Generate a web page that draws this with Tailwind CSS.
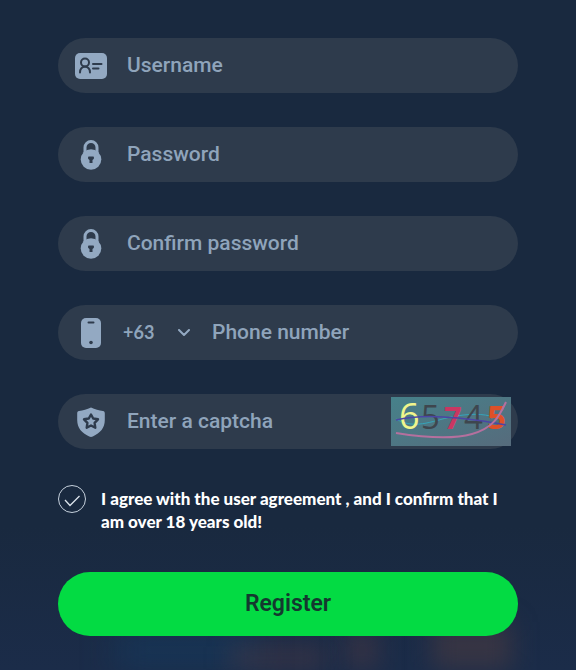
<!DOCTYPE html>
<html lang="en">
<head>
  <meta charset="UTF-8" />
  <meta name="viewport" content="width=device-width, initial-scale=1.0"/>
  <title>Register</title>
  <script src="https://cdn.jsdelivr.net/npm/@tailwindcss/browser@4"></script>
</head>
<body class="bg-[#19293f] font-['Roboto',sans-serif] text-[21px] font-medium text-[#8fa4bb]">

<div class="relative min-h-screen overflow-hidden">

  <!-- Background glow -->
  <div class="absolute inset-x-0 bottom-0 h-36 bg-linear-to-b from-transparent to-[#1b2c49]"></div>
  <div class="absolute bottom-0 left-1/5 h-10 w-1/4 bg-[#12406a]/40 blur-lg"></div>
  <div class="absolute bottom-0 left-2/5 h-6 w-1/6 bg-[#593b42]/40 blur-md"></div>
  <div class="absolute bottom-0 left-3/5 h-10 w-8 bg-[#593b42]/40 blur-md"></div>
  <div class="absolute bottom-0 right-16 h-12 w-20 bg-[#4a3a41]/60 blur-md"></div>

  <form class="relative px-[58px] pt-[38px] pb-8">

    <!-- Fields -->
    <div class="space-y-[34px]">
      <div class="flex h-[55px] items-center gap-5 rounded-full bg-[#2e3b4c] pl-[17px] pr-[7px]">
        <label for="username" class="shrink-0" aria-label="Username">
          <svg class="size-8" viewBox="0 0 32 32" fill="none">
            <rect x="0" y="3" width="32" height="26" rx="5" fill="#93a9c2"/>
            <g stroke="#2e3b4c" stroke-width="2" stroke-linecap="round">
              <circle cx="10" cy="12.500" r="4"/>
              <path d="M5 22.500c0-3.500 1.500-5.500 5-6 3.500.5 5 2.500 5 6M18 14h8.500M18 18.500h5.500"/>
            </g>
          </svg>
        </label>
        <input id="username" type="text" placeholder="Username" class="min-w-0 flex-1 bg-transparent pt-px outline-none placeholder:text-[#8fa4bb]" />
      </div>

      <div class="flex h-[55px] items-center gap-5 rounded-full bg-[#2e3b4c] pl-[17px] pr-[7px]">
        <label for="password" class="shrink-0" aria-label="Password">
          <svg class="size-8" viewBox="0 0 32 32" fill="none">
            <path d="M10 14V8.500a6 6 0 0 1 12 0V14" stroke="#93a9c2" stroke-width="3"/>
            <circle cx="16" cy="20.500" r="10.300" fill="#93a9c2"/>
            <path d="M13.500 17.500h5c1 1.500.5 2.800-1 3.500V24h-3v-3c-1.500-.7-2-2-1-3.500Z" fill="#2e3b4c"/>
          </svg>
        </label>
        <input id="password" type="password" placeholder="Password" class="min-w-0 flex-1 bg-transparent pt-px outline-none placeholder:text-[#8fa4bb]" />
      </div>

      <div class="flex h-[55px] items-center gap-5 rounded-full bg-[#2e3b4c] pl-[17px] pr-[7px]">
        <label for="confirm" class="shrink-0" aria-label="Confirm password">
          <svg class="size-8" viewBox="0 0 32 32" fill="none">
            <path d="M10 14V8.500a6 6 0 0 1 12 0V14" stroke="#93a9c2" stroke-width="3"/>
            <circle cx="16" cy="20.500" r="10.300" fill="#93a9c2"/>
            <path d="M13.500 17.500h5c1 1.500.5 2.800-1 3.500V24h-3v-3c-1.500-.7-2-2-1-3.500Z" fill="#2e3b4c"/>
          </svg>
        </label>
        <input id="confirm" type="password" placeholder="Confirm password" class="min-w-0 flex-1 bg-transparent pt-px outline-none placeholder:text-[#8fa4bb]" />
      </div>

      <div class="flex h-[55px] items-center rounded-full bg-[#2e3b4c] pl-[17px] pr-[7px]">
        <label for="phone" class="shrink-0" aria-label="Phone number">
          <svg class="size-8" viewBox="0 0 32 32" fill="none">
            <rect x="6" y="1" width="20" height="30" rx="5" fill="#93a9c2"/>
            <path d="M13.500 5.500h5" stroke="#2e3b4c" stroke-width="2" stroke-linecap="round"/>
            <circle cx="16" cy="25.500" r="1.800" fill="#2e3b4c"/>
          </svg>
        </label>
        <div class="relative ml-4 w-[89px] shrink-0">
          <select aria-label="Country code" class="w-full appearance-none bg-transparent font-['Lato',sans-serif] text-[18px] font-bold outline-none">
            <option>+63</option>
          </select>
          <svg class="pointer-events-none absolute inset-y-0 right-[22px] my-auto h-2 w-3" viewBox="0 0 12 8" fill="none" stroke="#93a9c2" stroke-width="2" stroke-linecap="round" stroke-linejoin="round">
            <path d="M1 1l5 5 5-5"/>
          </svg>
        </div>
        <input id="phone" type="tel" placeholder="Phone number" class="min-w-0 flex-1 bg-transparent pt-px outline-none placeholder:text-[#8fa4bb]" />
      </div>

      <div class="flex h-[55px] items-center gap-5 rounded-full bg-[#2e3b4c] pl-[17px] pr-[7px]">
        <label for="captcha" class="shrink-0" aria-label="Captcha">
          <svg class="size-8" viewBox="0 0 32 32" fill="none">
            <path d="M16 1.500c4 2 8 3 12 3.500 1.300.2 1.800 1 1.800 2.500V14c0 8-4.500 13-12 16.500-1.200.6-2.400.6-3.600 0C6.700 27 2.200 22 2.200 14V7.500C2.200 6 2.700 5.200 4 5c4-.5 8-1.500 12-3.500Z" fill="#93a9c2"/>
            <path d="M16 8.500l2.200 4 4.800.8-3.400 3.500.7 4.900-4.300-2.200-4.300 2.200.7-4.900L9 13.300l4.800-.8Z" stroke="#2e3b4c" stroke-width="2.400" stroke-linejoin="round"/>
          </svg>
        </label>
        <input id="captcha" type="text" placeholder="Enter a captcha" class="min-w-0 flex-1 bg-transparent pt-px outline-none placeholder:text-[#8fa4bb]" />
        <svg class="h-[49px] w-[120px] shrink-0 overflow-visible font-['Open_Sans',sans-serif] text-[33px] font-medium" viewBox="0 0 120 49" fill="none">
          <defs>
            <linearGradient id="teal" x1="0" y1="0" x2="1" y2="1">
              <stop offset="0" stop-color="#46818a"/>
              <stop offset="1" stop-color="#566b7c"/>
            </linearGradient>
          </defs>
          <rect width="120" height="49" fill="url(#teal)"/>
          <path d="M5 22C25 34 45 22 65 19s30-2 45 3" stroke="#35a5bb"/>
          <text x="8" y="32" fill="#f0f58c" font-size="36">6</text>
          <text x="30" y="32" fill="#3e464e">5</text>
          <text x="53" y="32" fill="#c93762" font-weight="700" font-size="31">7</text>
          <text x="73" y="32" fill="#3e464e">4</text>
          <text x="96" y="32" fill="#de5028" font-weight="700">5</text>
          <path d="M5 23c20-5 42-4 62-2s33 4 48 7" stroke="#4b45a5" stroke-width="1.500"/>
          <path d="M5 36c25 4 55 7 76 1S108 20 115 5" stroke="#b5709e" stroke-width="2"/>
        </svg>
      </div>
    </div>

    <!-- Agreement -->
    <label class="mt-9 flex items-start gap-[15px] font-['Lato',sans-serif] text-[17px] leading-[23px] font-black text-white">
      <span class="relative size-7 shrink-0">
        <input type="checkbox" checked class="block size-7 appearance-none rounded-full border border-[#c5d0dc]" />
        <svg class="pointer-events-none absolute inset-0 size-7" viewBox="0 0 28 28" fill="none" stroke="#dce4ec" stroke-width="1.300">
          <path d="M7 15l5 5.500L21.500 11"/>
        </svg>
      </span>
      <span class="pt-[2px]">I agree with the user agreement , and I confirm that I am over 18 years old!</span>
    </label>

    <button type="submit" class="mt-[39px] h-16 w-full rounded-full bg-[#03db43] pt-px text-[23px] font-semibold text-[#14382f]">Register</button>
  </form>
</div>

</body>
</html>
